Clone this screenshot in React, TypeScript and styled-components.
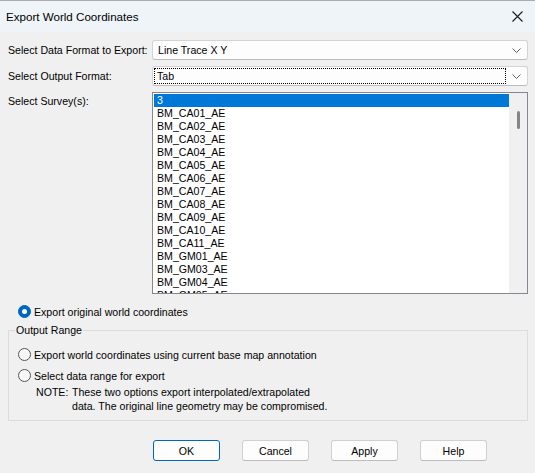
import React, {useState} from 'react';
import styled, {createGlobalStyle} from 'styled-components';

const GlobalStyle = createGlobalStyle`
  html, body {
    margin: 0;
    padding: 0;
    background: #f0f0f0;
  }
  body {
    font-family: "Liberation Sans", Arial, sans-serif;
    font-size: 10.6px;
    color: #000;
  }
`;

const Window = styled.div`
  width: 535px;
  height: 473px;
  display: flex;
  flex-direction: column;
  background: #f0f0f0;
  box-sizing: border-box;
  border-top: 1px solid #a9acb0;
`;

const TitleBar = styled.div`
  height: 31px;
  display: flex;
  align-items: center;
  justify-content: space-between;
  padding: 0 6px 0 6px;
  background: #eff4f9;
`;

const Title = styled.span`
  font-family: "Liberation Sans", Arial, sans-serif;
  font-size: 11.6px;
  padding-bottom: 1px;
`;

const CloseButton = styled.span`
  width: 14px;
  height: 14px;
  margin-right: 5px;
  display: flex;
  align-items: center;
  justify-content: center;
`;

const Body = styled.div`
  display: flex;
  flex-direction: column;
  padding: 8px 7px 0 8px;
`;

const FormGrid = styled.div`
  display: grid;
  grid-template-columns: 144px 376px;
  row-gap: 6px;
`;

const Label = styled.div<{ top?: boolean }>`
  display: flex;
  align-items: ${p => (p.top ? 'flex-start' : 'center')};
  padding-top: ${p => (p.top ? '3px' : '0')};
  white-space: nowrap;
`;

const Combo = styled.div`
  height: 20px;
  box-sizing: border-box;
  border: 1px solid #d4d4d4;
  border-bottom-color: #bcbcbc;
  border-radius: 3px;
  background: #fdfdfd;
  display: flex;
  align-items: center;
  padding: 0 6px 0 1px;
`;

const ComboText = styled.span<{ focused?: boolean }>`
  flex: 1;
  height: 16px;
  box-sizing: border-box;
  display: flex;
  align-items: center;
  padding-left: ${p => (p.focused ? '2px' : '3px')};
  margin-right: 6px;
  border: 1px ${p => (p.focused ? 'dotted #000' : 'solid transparent')};
`;

const ListBox = styled.div`
  grid-column: 2;
  height: 202px;
  box-sizing: border-box;
  border: 1px solid #828790;
  background: #fff;
  display: flex;
  overflow: hidden;
`;

const ListItems = styled.div`
  flex: 1;
  padding: 1px 0 0 1px;
`;

const ListItem = styled.div<{ selected?: boolean }>`
  height: 13px;
  line-height: 13px;
  padding-left: 3px;
  white-space: nowrap;
  background: ${p => (p.selected ? '#0078d7' : 'transparent')};
  color: ${p => (p.selected ? '#fff' : '#000')};
`;

const ScrollTrack = styled.div`
  width: 18px;
  background: #f0f0f0;
  display: flex;
  justify-content: center;
  padding-top: 18px;
  box-sizing: border-box;
`;

const ScrollThumb = styled.div`
  width: 3px;
  height: 18px;
  border-radius: 2px;
  background: #858585;
`;

const RadioRow = styled.label`
  display: flex;
  align-items: center;
  gap: 3px;
  height: 13px;
`;

const RadioCircle = styled.span<{ checked?: boolean }>`
  width: 13px;
  height: 13px;
  box-sizing: border-box;
  border-radius: 50%;
  border: 1px solid ${p => (p.checked ? '#0067c0' : '#555')};
  background: ${p => (p.checked ? '#0067c0' : '#f7f7f7')};
  display: flex;
  align-items: center;
  justify-content: center;
  &::after {
    content: '';
    display: ${p => (p.checked ? 'block' : 'none')};
    width: 5px;
    height: 5px;
    border-radius: 50%;
    background: #fff;
  }
`;

const TopRadio = styled.div`
  margin-top: 11px;
  padding-left: 10px;
`;

const Group = styled.fieldset`
  margin: 6px 0 0 0;
  padding: 11px 0 0 9px;
  border: 1px solid #dcdcdc;
  height: 97px;
  box-sizing: border-box;
  display: flex;
  flex-direction: column;
  gap: 8px;
`;

const Legend = styled.legend`
  padding: 0 1px;
  margin-left: -3px;
  line-height: 13px;
`;

const Note = styled.div`
  display: grid;
  grid-template-columns: 36px auto;
  padding-left: 18px;
  margin-top: -5px;
  line-height: 14px;
`;

const ButtonRow = styled.div`
  display: flex;
  gap: 22px;
  padding-left: 145px;
  margin-top: 19px;
`;

const Button = styled.button<{ primary?: boolean }>`
  width: 67px;
  height: 21px;
  font-family: "Liberation Sans", Arial, sans-serif;
  font-size: 10.6px;
  color: #000;
  background: #fdfdfd;
  border: 1px solid ${p => (p.primary ? '#0067c0' : '#d0d0d0')};
  border-bottom-color: ${p => (p.primary ? '#0067c0' : '#bcbcbc')};
  border-radius: 3px;
  padding: 0;
`;

function Chevron() {
    return (
        <svg width="9" height="5" viewBox="0 0 9 5">
            <polyline points="0.5,0.5 4.5,4.5 8.5,0.5" fill="none" stroke="#606060" strokeWidth="1" />
        </svg>
    );
}

const surveys = [
    '3', 'BM_CA01_AE', 'BM_CA02_AE', 'BM_CA03_AE', 'BM_CA04_AE', 'BM_CA05_AE',
    'BM_CA06_AE', 'BM_CA07_AE', 'BM_CA08_AE', 'BM_CA09_AE', 'BM_CA10_AE',
    'BM_CA11_AE', 'BM_GM01_AE', 'BM_GM03_AE', 'BM_GM04_AE', 'BM_GM05_AE',
];

function App() {
    const [selected, setSelected] = useState(0);
    const [mode, setMode] = useState('original');

    return (
        <Window>
            <GlobalStyle />
            <TitleBar>
                <Title>Export World Coordinates</Title>
                <CloseButton>
                    <svg width="11" height="11" viewBox="0 0 11 11">
                        <path d="M0.5 0.5 L10.5 10.5 M10.5 0.5 L0.5 10.5" stroke="#1a1a1a" strokeWidth="1.1" />
                    </svg>
                </CloseButton>
            </TitleBar>
            <Body>
                <FormGrid>
                    <Label>Select Data Format to Export:</Label>
                    <Combo>
                        <ComboText>Line Trace X Y</ComboText>
                        <Chevron />
                    </Combo>
                    <Label>Select Output Format:</Label>
                    <Combo>
                        <ComboText focused>Tab</ComboText>
                        <Chevron />
                    </Combo>
                    <Label top>Select Survey(s):</Label>
                    <ListBox>
                        <ListItems>
                            {surveys.map((s, i) => (
                                <ListItem key={s} selected={i === selected} onClick={() => setSelected(i)}>
                                    {s}
                                </ListItem>
                            ))}
                        </ListItems>
                        <ScrollTrack>
                            <ScrollThumb />
                        </ScrollTrack>
                    </ListBox>
                </FormGrid>
                <TopRadio>
                    <RadioRow onClick={() => setMode('original')}>
                        <RadioCircle checked={mode === 'original'} />
                        Export original world coordinates
                    </RadioRow>
                </TopRadio>
                <Group>
                    <Legend>Output Range</Legend>
                    <RadioRow onClick={() => setMode('annotation')}>
                        <RadioCircle checked={mode === 'annotation'} />
                        Export world coordinates using current base map annotation
                    </RadioRow>
                    <RadioRow onClick={() => setMode('range')}>
                        <RadioCircle checked={mode === 'range'} />
                        Select data range for export
                    </RadioRow>
                    <Note>
                        <span>NOTE:</span>
                        <span>These two options export interpolated/extrapolated</span>
                        <span />
                        <span>data. The original line geometry may be compromised.</span>
                    </Note>
                </Group>
                <ButtonRow>
                    <Button primary>OK</Button>
                    <Button>Cancel</Button>
                    <Button>Apply</Button>
                    <Button>Help</Button>
                </ButtonRow>
            </Body>
        </Window>
    );
}

export default App;
